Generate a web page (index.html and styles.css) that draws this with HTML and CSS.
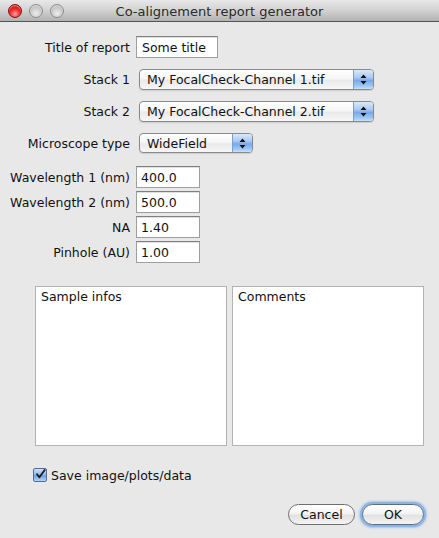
FILE: index.html
```html
<!DOCTYPE html>
<html>
<head>
<meta charset="utf-8">
<title>Co-alignement report generator</title>
<link rel="stylesheet" href="styles.css">
</head>
<body>
<div class="window">
  <div class="titlebar">
    <div class="lights">
      <span class="light close"></span>
      <span class="light"></span>
      <span class="light"></span>
    </div>
    <div class="title">Co-alignement report generator</div>
  </div>
  <div class="content">
    <div class="row row-title">
      <label class="label">Title of report</label>
      <div class="field field-title">Some title</div>
    </div>
    <div class="row row-popup">
      <label class="label">Stack 1</label>
      <div class="popup popup-wide"><span class="popup-text">My FocalCheck-Channel 1.tif</span><span class="popup-arrows"><svg width="7" height="11" viewBox="0 0 7 11"><path d="M3.5 0.5 L6.5 4 L0.5 4 Z M3.5 10.5 L6.5 7 L0.5 7 Z" fill="#111"/></svg></span></div>
    </div>
    <div class="row row-popup">
      <label class="label">Stack 2</label>
      <div class="popup popup-wide"><span class="popup-text">My FocalCheck-Channel 2.tif</span><span class="popup-arrows"><svg width="7" height="11" viewBox="0 0 7 11"><path d="M3.5 0.5 L6.5 4 L0.5 4 Z M3.5 10.5 L6.5 7 L0.5 7 Z" fill="#111"/></svg></span></div>
    </div>
    <div class="row row-popup row-micro">
      <label class="label">Microscope type</label>
      <div class="popup popup-small"><span class="popup-text">WideField</span><span class="popup-arrows"><svg width="7" height="11" viewBox="0 0 7 11"><path d="M3.5 0.5 L6.5 4 L0.5 4 Z M3.5 10.5 L6.5 7 L0.5 7 Z" fill="#111"/></svg></span></div>
    </div>
    <div class="row row-num row-first">
      <label class="label">Wavelength 1 (nm)</label>
      <div class="field field-num">400.0</div>
    </div>
    <div class="row row-num">
      <label class="label">Wavelength 2 (nm)</label>
      <div class="field field-num">500.0</div>
    </div>
    <div class="row row-num">
      <label class="label">NA</label>
      <div class="field field-num">1.40</div>
    </div>
    <div class="row row-num">
      <label class="label">Pinhole (AU)</label>
      <div class="field field-num">1.00</div>
    </div>
    <div class="areas">
      <div class="area">Sample infos</div>
      <div class="area">Comments</div>
    </div>
    <div class="check-row">
      <span class="checkbox"><svg width="12" height="12" viewBox="0 0 12 12"><path d="M2.2 6.2 L4.8 9.6 L10.6 1.6" fill="none" stroke="#1a1a1a" stroke-width="2" stroke-linecap="round" stroke-linejoin="round"/></svg></span>
      <span class="check-label">Save image/plots/data</span>
    </div>
    <div class="buttons">
      <div class="btn btn-cancel">Cancel</div>
      <div class="btn btn-ok">OK</div>
    </div>
  </div>
</div>
</body>
</html>
```
FILE: styles.css
```css
* { box-sizing: border-box; }
html, body {
  margin: 0;
  padding: 0;
}
body {
  width: 439px;
  height: 538px;
  background: #e8e8e8;
  font-family: "DejaVu Sans", "Liberation Sans", sans-serif;
  font-size: 12.5px;
  color: #111;
  overflow: hidden;
}
.window {
  width: 439px;
  height: 538px;
  display: flex;
  flex-direction: column;
}
.titlebar {
  height: 22px;
  flex: none;
  display: flex;
  align-items: center;
  position: relative;
  background: linear-gradient(to bottom, #e8e8e8 0%, #d4d4d4 45%, #b2b2b2 100%);
  border-bottom: 1px solid #545454;
}
.lights {
  display: flex;
  gap: 7px;
  padding-left: 8px;
  position: absolute;
  left: 0;
  top: 4px;
}
.light {
  width: 14px;
  height: 14px;
  border-radius: 50%;
  background: radial-gradient(circle at 50% 70%, #ececec 0%, #cfcfcf 45%, #a9a9a9 100%);
  border: 1px solid #8c8c8c;
  box-shadow: inset 0 1px 1px rgba(255,255,255,0.6);
}
.light.close {
  background: radial-gradient(circle at 50% 75%, #ffa0a0 0%, #f22a2a 45%, #b00000 100%);
  border-color: #7a1010;
}
.title {
  flex: 1;
  text-align: center;
  font-size: 13px;
  color: #2a2a2a;
  margin-top: 1px;
}
.content {
  flex: 1;
  display: flex;
  flex-direction: column;
}
.row {
  display: flex;
  align-items: center;
}
.label {
  width: 130px;
  text-align: right;
  margin-right: 6px;
  white-space: nowrap;
}
.row-title { margin-top: 14px; height: 22px; }
.row-popup { margin-top: 11px; height: 21px; }
.row-micro { height: 20px; }
.row-num { margin-top: 3px; height: 22px; }
.row-first { margin-top: 13px; }
.field {
  height: 22px;
  background: #fff;
  border: 1px solid #9e9e9e;
  border-top-color: #808080;
  box-shadow: inset 0 1px 0 #e0e0e0;
  padding: 3px 4px 0 4px;
  white-space: nowrap;
}
.field-title { width: 82px; padding-left: 5px; }
.field-num { width: 64px; }
.popup {
  margin-left: 3px;
  height: 100%;
  display: flex;
  border: 1px solid #8a8a8a;
  border-radius: 4px;
  overflow: hidden;
  background: linear-gradient(to bottom, #ffffff 0%, #f6f6f6 45%, #e9e9e9 55%, #f7f7f7 100%);
  box-shadow: 0 1px 1px rgba(0,0,0,0.12);
}
.popup-wide { width: 235px; }
.popup-small { width: 114px; }
.popup-text {
  flex: 1;
  padding-left: 7px;
  display: flex;
  align-items: center;
  white-space: nowrap;
}
.popup-arrows {
  width: 20px;
  flex: none;
  display: flex;
  align-items: center;
  justify-content: center;
  border-left: 1px solid #7d9fcf;
  background: linear-gradient(to bottom, #d9e8fb 0%, #a9c9f2 40%, #78a9e8 55%, #9fc8f5 85%, #c8e2fb 100%);
}
.areas {
  display: flex;
  gap: 5px;
  margin-top: 23px;
  padding-left: 35px;
}
.area {
  width: 192px;
  height: 160px;
  background: #fff;
  border: 1px solid #b2b2b2;
  padding: 2px 5px;
}
.check-row {
  display: flex;
  align-items: center;
  margin-top: 22px;
  padding-left: 33px;
  height: 14px;
}
.checkbox {
  width: 14px;
  height: 14px;
  border: 1px solid #4e6d99;
  border-radius: 2px;
  background: linear-gradient(to bottom, #cfe1f8 0%, #8db7ea 50%, #6d9fe0 55%, #b5d4f6 100%);
  display: flex;
  align-items: center;
  justify-content: center;
  margin-right: 4px;
}
.checkbox svg { margin-top: -2px; margin-left: 1px; }
.buttons {
  display: flex;
  justify-content: flex-end;
  gap: 7px;
  margin-top: 22px;
  padding-right: 15px;
}
.btn {
  height: 21px;
  border: 1px solid #6f6f6f;
  border-radius: 11px;
  background: linear-gradient(to bottom, #ffffff 0%, #f3f3f3 45%, #e2e2e2 55%, #f4f4f4 100%);
  display: flex;
  align-items: center;
  justify-content: center;
}
.btn-cancel { width: 67px; }
.btn-ok {
  width: 62px;
  border-color: #5a6e8a;
  box-shadow: 0 0 0 2px #8cb5e6, 0 0 2px 3px rgba(120,165,225,0.5);
}
```
